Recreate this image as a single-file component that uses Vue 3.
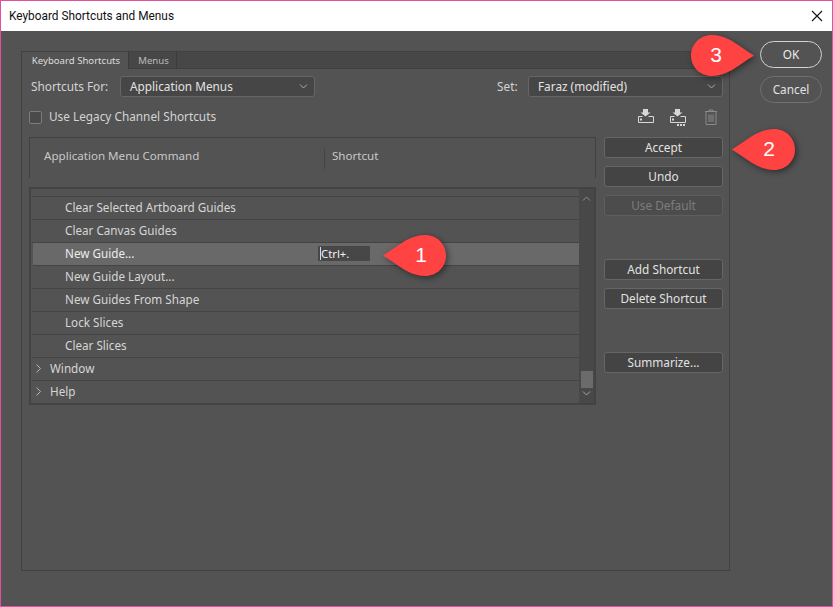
<template>
  <div class="window">
    <div class="titlebar">
      <span class="title">Keyboard Shortcuts and Menus</span>
      <svg class="close" width="12" height="12" viewBox="0 0 12 12">
        <path d="M1 1L11 11M11 1L1 11" stroke="#111" stroke-width="1.1" fill="none" />
      </svg>
    </div>

    <div class="dialog">
      <div class="panel">
        <div class="tabs">
          <div class="tab active">Keyboard Shortcuts</div>
          <div class="tab">Menus</div>
        </div>

        <div class="panel-body">
          <div class="form-row">
            <label class="for-label">Shortcuts For:</label>
            <div class="select">
              <span>Application Menus</span>
              <svg width="9" height="5" viewBox="0 0 9 5"><path d="M1 .5L4.5 4L8 .5" stroke="#aaa" fill="none" /></svg>
            </div>
            <label class="set-label">Set:</label>
            <div class="select">
              <span>Faraz (modified)</span>
              <svg width="9" height="5" viewBox="0 0 9 5"><path d="M1 .5L4.5 4L8 .5" stroke="#aaa" fill="none" /></svg>
            </div>
          </div>

          <div class="tool-row">
            <span class="checkbox"></span>
            <span class="check-label">Use Legacy Channel Shortcuts</span>
            <div class="icons">
              <svg width="18" height="18" viewBox="0 0 18 18">
                <path d="M6 1H11V4.5H13.5L8.5 8.5L3.5 4.5H6Z" fill="#d8d8d8" />
                <path d="M1.5 8.5H5.5M11.5 8.5H16.5V14.5H1.5V8.5" stroke="#d8d8d8" fill="none" />
                <rect x="3" y="10.5" width="2" height="2" fill="#d8d8d8" />
              </svg>
              <svg width="18" height="18" viewBox="0 0 18 18">
                <path d="M6 1H11V4.5H13.5L8.5 8.5L3.5 4.5H6Z" fill="#d8d8d8" />
                <path d="M1.5 8.5H5.5M11.5 8.5H16.5V14.5H1.5V8.5" stroke="#d8d8d8" fill="none" />
                <rect x="3" y="10.5" width="2" height="2" fill="#d8d8d8" />
                <path d="M8 16h2v2H8zM11 16h2v2h-2zM14 16h2v2h-2z" fill="#d8d8d8" />
              </svg>
              <svg class="trash" width="14" height="18" viewBox="0 0 14 18">
                <path d="M1 3.5H13M5 3.5V2H9V3.5M2 3.5V16.5H12V3.5M5 6.5V14M7 6.5V14M9 6.5V14" stroke="#8a8a8a" fill="none" />
              </svg>
            </div>
          </div>

          <div class="main">
            <div class="left">
              <div class="table-head">
                <span class="head-command">Application Menu Command</span>
                <span class="head-shortcut">Shortcut</span>
              </div>
              <div class="list">
                <div class="rows">
                  <div class="row-cut"></div>
                  <div
                    v-for="row in rows"
                    :key="row.name"
                    class="row"
                    :class="{ selected: row.shortcut, group: row.group }"
                  >
                    <span class="row-name">
                      <svg v-if="row.group" width="5" height="9" viewBox="0 0 5 9"><path d="M.5 .5L4.5 4.5L.5 8.5" stroke="#b5b5b5" fill="none" /></svg>
                      {{ row.name }}
                    </span>
                    <span v-if="row.shortcut" class="shortcut-input"><i class="caret"></i>{{ row.shortcut }}</span>
                  </div>
                </div>
                <div class="scrollbar">
                  <svg class="up" width="9" height="5" viewBox="0 0 9 5"><path d="M1 4.5L4.5 1L8 4.5" stroke="#8d8d8d" fill="none" /></svg>
                  <div class="thumb"></div>
                  <svg class="down" width="9" height="5" viewBox="0 0 9 5"><path d="M1 .5L4.5 4L8 .5" stroke="#a5a5a5" fill="none" /></svg>
                </div>
              </div>
            </div>

            <div class="actions">
              <button
                v-for="b in actions"
                :key="b.label"
                class="btn"
                :class="{ disabled: b.disabled }"
                :style="{ marginTop: b.gap + 'px' }"
              >{{ b.label }}</button>
            </div>
          </div>
        </div>
      </div>

      <div class="side">
        <button class="pill primary">OK</button>
        <button class="pill">Cancel</button>
      </div>
    </div>

    <!-- numbered callouts on top of the dialog -->
    <div v-for="c in callouts" :key="c.n" class="callout" :class="c.cls">
      <svg width="63" height="41" viewBox="0 0 63 41">
        <path d="M0 20.5C14 12 26 0 42 0C54 0 63 9 63 20.5C63 32 54 41 42 41C26 41 14 29 0 20.5Z" fill="#ff4343" />
      </svg>
      <span>{{ c.n }}</span>
    </div>
  </div>
</template>

<script setup>
const rows = [
  { name: 'Clear Selected Artboard Guides' },
  { name: 'Clear Canvas Guides' },
  { name: 'New Guide...', shortcut: 'Ctrl+.' },
  { name: 'New Guide Layout...' },
  { name: 'New Guides From Shape' },
  { name: 'Lock Slices' },
  { name: 'Clear Slices' },
  { name: 'Window', group: true },
  { name: 'Help', group: true },
]

const actions = [
  { label: 'Accept', gap: 0 },
  { label: 'Undo', gap: 8 },
  { label: 'Use Default', gap: 8, disabled: true },
  { label: 'Add Shortcut', gap: 43 },
  { label: 'Delete Shortcut', gap: 8 },
  { label: 'Summarize...', gap: 43 },
]

const callouts = [
  { n: 1, cls: 'c1' },
  { n: 2, cls: 'c2' },
  { n: 3, cls: 'c3' },
]
</script>

<style>
html, body {
  margin: 0;
  background: #535353;
}
</style>

<style scoped>
* {
  box-sizing: border-box;
}

.window {
  position: relative;
  width: 833px;
  height: 607px;
  border: 1px solid #e0509f;
  background: #535353;
  font-family: "Noto Sans", sans-serif;
  font-size: 11.8px;
  color: #d4d4d4;
  overflow: hidden;
}

.titlebar {
  display: flex;
  align-items: center;
  justify-content: space-between;
  height: 30px;
  padding: 0 9px 0 8px;
  background: #fff;
  color: #111;
}

.title {
  font-family: Roboto, sans-serif;
  font-size: 11.85px;
}

.dialog {
  display: flex;
  padding: 20px 9px 0 20px;
}

.panel {
  width: 709px;
  height: 520px;
  border: 1px solid #414141;
}

.tabs {
  display: flex;
  height: 17px;
  background: #474747;
  border-bottom: 1px solid #3f3f3f;
  font-size: 9.6px;
}

.tab {
  display: flex;
  align-items: center;
  justify-content: center;
  width: 48px;
  height: 17px;
  padding-left: 2px;
  border-right: 1px solid #3c3c3c;
  color: #bdbdbd;
}

.tab.active {
  width: 107px;
  background: #535353;
  color: #dcdcdc;
}

.panel-body {
  padding: 7px 6px 0 7px;
}

.form-row {
  display: flex;
  align-items: center;
  height: 21px;
}

.for-label {
  width: 91px;
  padding: 0 0 2px 2px;
}

.set-label {
  margin-left: 182px;
  width: 31px;
  padding-bottom: 2px;
}

.select {
  display: flex;
  align-items: center;
  justify-content: space-between;
  width: 195px;
  height: 21px;
  padding: 0 6px 2px 9px;
  background: #464646;
  border: 1px solid #666;
  border-radius: 3px;
  color: #e2e2e2;
}

.select svg {
  margin-top: 2px;
}

.tool-row {
  display: flex;
  align-items: center;
  height: 18px;
  margin-top: 11px;
}

.checkbox {
  width: 13px;
  height: 13px;
  border: 1px solid #7c7c7c;
  border-radius: 2px;
  background: #4a4a4a;
}

.check-label {
  margin-left: 7px;
  padding-bottom: 2px;
}

.icons {
  display: flex;
  align-items: center;
  gap: 14px;
  margin-left: auto;
  margin-right: 5px;
}

.trash {
  margin-left: 3px;
}

.main {
  display: grid;
  grid-template-columns: 567px 119px;
  column-gap: 8px;
  margin-top: 11px;
}

.table-head {
  display: flex;
  align-items: center;
  height: 41px;
  border: 1px solid #414141;
  border-bottom: none;
  padding-left: 14px;
  color: #c8c8c8;
  font-size: 11.6px;
}

.head-command {
  width: 280px;
  padding-bottom: 5px;
}

.head-shortcut {
  height: 21px;
  padding-left: 7px;
  border-left: 1px solid #444;
  line-height: 16px;
}

.list {
  display: flex;
  height: 218px;
  margin-top: 9px;
  border: 2px solid #434343;
}

.rows {
  flex: 1;
  padding-left: 1px;
  font-size: 11.7px;
}

.row-cut {
  height: 8px;
  border-bottom: 1px solid #444;
}

.row {
  display: grid;
  grid-template-columns: 286px 1fr;
  align-items: center;
  height: 23px;
  padding-bottom: 2px;
  border-bottom: 1px solid #444;
}

.row:last-child {
  height: 22px;
  border-bottom: none;
}

.row-name {
  padding-left: 33px;
  color: #d6d6d6;
}

.row.group .row-name {
  display: flex;
  align-items: center;
  gap: 9px;
  padding-left: 4px;
}

.row.selected {
  background: #696969;
  margin-left: 1px;
}

.row.selected .row-name {
  padding-left: 32px;
  color: #ececec;
}

.shortcut-input {
  display: flex;
  align-items: center;
  width: 52px;
  height: 15px;
  margin-left: -1px;
  padding-left: 2px;
  background: #474747;
  color: #f0f0f0;
  font-size: 11.3px;
}

.caret {
  width: 1px;
  height: 13px;
  background: #cfd8e6;
}

.scrollbar {
  display: flex;
  flex-direction: column;
  align-items: center;
  width: 15px;
  background: #484848;
}

.up {
  margin-top: 7px;
}

.thumb {
  width: 12px;
  height: 17px;
  margin-top: auto;
  background: #6b6b6b;
}

.down {
  margin: 3px 0 7px;
}

.actions {
  display: flex;
  flex-direction: column;
}

.btn,
.pill {
  font: inherit;
  color: #e2e2e2;
  background: #444;
  border: 1px solid #666;
  padding: 0 0 2px;
}

.btn {
  height: 21px;
  border-radius: 3px;
}

.btn.disabled {
  background: #4c4c4c;
  border-color: #5e5e5e;
  color: #7d7d7d;
}

.side {
  display: flex;
  flex-direction: column;
  gap: 8px;
  margin-left: 30px;
  margin-top: -10px;
}

.pill {
  width: 62px;
  height: 27px;
  border-radius: 14px;
  background: #535353;
  border-color: #707070;
}

.pill.primary {
  border: 1px solid #d2d2d2;
  color: #ececec;
}

.callout {
  position: absolute;
  width: 63px;
  height: 41px;
  color: #fff;
  font-family: "Liberation Sans", sans-serif;
  font-size: 21px;
}

.callout svg {
  display: block;
  overflow: visible;
  filter: drop-shadow(2px 2px 3px rgba(0, 0, 0, 0.45));
}

.callout span {
  position: absolute;
  top: 8px;
  left: 0;
  width: 14px;
  text-align: center;
}

.c1 { left: 382px; top: 234px; }
.c1 span { left: 31px; }
.c2 { left: 731px; top: 128px; }
.c2 span { left: 30px; }
.c3 { left: 690px; top: 34px; }
.c3 svg { transform: scaleX(-1); filter: drop-shadow(-2px 2px 3px rgba(0, 0, 0, 0.45)); }
.c3 span { left: 18px; }
</style>
